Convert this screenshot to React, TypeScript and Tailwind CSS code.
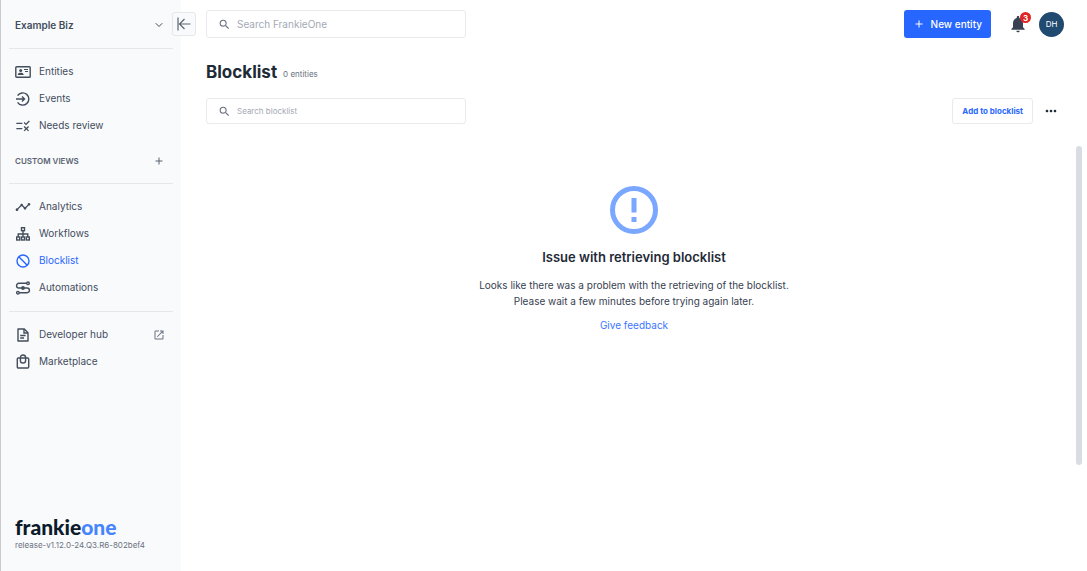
import { useState } from "react";
import type { ReactNode } from "react";
import {
  MdAdd,
  MdMoreHoriz,
  MdNotifications,
  MdOpenInNew,
  MdRule,
  MdSearch,
  MdTimeline,
} from "react-icons/md";
import { FiChevronDown } from "react-icons/fi";

type IconProps = { className?: string };

function EntitiesIcon({ className }: IconProps) {
  return (
    <svg viewBox="0 0 16 16" className={className} fill="none">
      <rect x="0.8" y="2.8" width="14.4" height="10.4" rx="0.8" stroke="currentColor" strokeWidth="1.4" />
      <circle cx="5.7" cy="6.5" r="1.5" fill="currentColor" />
      <path d="M2.7 10.9c0-1.5 1.4-2.1 3-2.1s3 .6 3 2.1z" fill="currentColor" />
      <path d="M9 5.5h4M10 7.5h3" stroke="currentColor" strokeWidth="1" />
    </svg>
  );
}

function EventsIcon({ className }: IconProps) {
  return (
    <svg viewBox="0 0 16 16" className={className} fill="none" stroke="currentColor" strokeWidth="1.4">
      <path d="M2.6 4.7A6.1 6.1 0 1 1 2.6 11.3" />
      <path d="M1 8h8.5M7 5.5 9.5 8 7 10.5" />
    </svg>
  );
}

function WorkflowsIcon({ className }: IconProps) {
  return (
    <svg viewBox="0 0 16 16" className={className} fill="none" stroke="currentColor" strokeWidth="1.4">
      <rect x="6.5" y="1.7" width="3" height="3" />
      <rect x="1.7" y="11" width="3" height="3" />
      <rect x="6.5" y="11" width="3" height="3" />
      <rect x="11.3" y="11" width="3" height="3" />
      <path d="M8 4.7V11M3.2 11V8h9.6v3" />
    </svg>
  );
}

function BlockIcon({ className }: IconProps) {
  return (
    <svg viewBox="0 0 16 16" className={className} fill="none" stroke="currentColor" strokeWidth="1.4">
      <circle cx="8" cy="8" r="6" />
      <path d="M3.8 3.8l8.4 8.4" />
    </svg>
  );
}

function AutomationsIcon({ className }: IconProps) {
  return (
    <svg viewBox="0 0 16 16" className={className} fill="none" stroke="currentColor" strokeWidth="1.4">
      <circle cx="13" cy="3.3" r="1.3" />
      <circle cx="2.9" cy="12.7" r="1.3" />
      <path d="M11.7 3.3H3.9a2.35 2.35 0 0 0 0 4.7h8.2a2.35 2.35 0 0 1 0 4.7H4.2" />
      <circle cx="8" cy="8" r="1.9" fill="currentColor" stroke="none" />
    </svg>
  );
}

function DocIcon({ className }: IconProps) {
  return (
    <svg viewBox="0 0 16 16" className={className} fill="none" stroke="currentColor" strokeWidth="1.4">
      <path d="M3 2h6.3L13 5.7V14H3z" strokeLinejoin="round" />
      <path d="M9 2v4h4M5.2 8.5h5.4M5.2 11h3.8" />
    </svg>
  );
}

function BagIcon({ className }: IconProps) {
  return (
    <svg viewBox="0 0 16 16" className={className} fill="none" stroke="currentColor" strokeWidth="1.4">
      <rect x="2.3" y="4" width="11.4" height="10" rx="1" />
      <path d="M5.4 6.4V3.6a2.6 2.6 0 0 1 5.2 0v2.8a2.6 2.6 0 0 1-5.2 0z" />
    </svg>
  );
}

function CollapseIcon({ className }: IconProps) {
  return (
    <svg viewBox="0 0 14 14" className={className} fill="none" stroke="currentColor" strokeWidth="1.2">
      <path d="M1 .5v13M13.5 7H2.5M7.5 2 2.5 7l5 5" />
    </svg>
  );
}

function ErrorIcon({ className }: IconProps) {
  return (
    <svg viewBox="0 0 48 48" className={className} fill="none">
      <circle cx="24" cy="24" r="21.5" stroke="currentColor" strokeWidth="5" />
      <path d="M21.5 12h5v14.5h-5zM21.5 31h5v5h-5z" fill="currentColor" />
    </svg>
  );
}

type NavItemProps = {
  icon: ReactNode;
  label: string;
  active?: boolean;
  external?: boolean;
};

function NavItem({ icon, label, active, external }: NavItemProps) {
  return (
    <li>
      <a
        href="#"
        className={`flex h-[27px] items-center gap-2 px-1.5 text-[10px] ${
          active ? "text-[#2766ff]" : "text-[#434d5c]"
        }`}
      >
        {icon}
        <span className="flex-1">{label}</span>
        {external && <MdOpenInNew className="mr-0.5 size-3 text-[#6b7280]" />}
      </a>
    </li>
  );
}

function SearchBox({ id, placeholder, className }: { id: string; placeholder: string; className: string }) {
  return (
    <label
      htmlFor={id}
      className={`flex w-[260px] items-center gap-1.5 rounded-[3px] border border-[#e8eaed] bg-white px-[11px] ${className}`}
    >
      <MdSearch className="size-[13px] shrink-0 text-[#6b7280]" />
      <input
        id={id}
        type="text"
        placeholder={placeholder}
        aria-label={placeholder}
        className="w-full bg-transparent outline-none placeholder:text-[#a3a9b5]"
      />
    </label>
  );
}

function Sidebar({ onCollapse }: { onCollapse: () => void }) {
  return (
    <aside className="relative flex w-[181px] shrink-0 flex-col border-l border-[#c9cbce] bg-[#f9fafc] px-2">
      <button
        type="button"
        className="flex h-12 items-center justify-between px-1.5 pt-0.5 text-[10px] font-semibold text-[#434d5c]"
      >
        Example Biz
        <FiChevronDown className="mr-0.5 size-3" />
      </button>
      <button
        type="button"
        onClick={onCollapse}
        aria-label="Collapse menu"
        className="absolute top-3 left-[171px] flex size-6 items-center justify-center rounded-[3px] border border-[#e5e7eb] bg-[#f9fafc] text-[#5b6472]"
      >
        <CollapseIcon className="size-3.5" />
      </button>

      <nav>
        <ul className="border-t border-[#e5e7eb] pt-[9px]">
          <NavItem icon={<EntitiesIcon className="size-4" />} label="Entities" />
          <NavItem icon={<EventsIcon className="size-4" />} label="Events" />
          <NavItem icon={<MdRule className="size-4" />} label="Needs review" />
        </ul>
        <div className="flex h-11 items-center justify-between px-1.5 text-[8px] font-semibold text-[#5b6472]">
          CUSTOM VIEWS
          <button type="button" aria-label="Add custom view">
            <MdAdd className="mr-0.5 size-3" />
          </button>
        </div>
        <ul className="border-t border-[#e5e7eb] pt-[9px] pb-2.5">
          <NavItem icon={<MdTimeline className="size-4" />} label="Analytics" />
          <NavItem icon={<WorkflowsIcon className="size-4" />} label="Workflows" />
          <NavItem icon={<BlockIcon className="size-4" />} label="Blocklist" active />
          <NavItem icon={<AutomationsIcon className="size-4" />} label="Automations" />
        </ul>
        <ul className="border-t border-[#e5e7eb] pt-[9px]">
          <NavItem icon={<DocIcon className="size-4" />} label="Developer hub" external />
          <NavItem icon={<BagIcon className="size-4" />} label="Marketplace" />
        </ul>
      </nav>

      <div className="mt-auto px-1.5 pb-5">
        <div className="font-['Lato',sans-serif] text-[21px] leading-6 font-black text-[#0b1b2b]">
          frankie<span className="text-[#4785ff]">one</span>
        </div>
        <div className="text-[8px] leading-3 text-[#6b7280]">release-v1.12.0-24.Q3.R6-802bef4</div>
      </div>
    </aside>
  );
}

export default function App() {
  const [collapsed, setCollapsed] = useState(false);

  return (
    <div className="flex min-h-screen bg-white font-['Inter','Liberation_Sans',sans-serif] text-[#1f2a37]">
      {!collapsed && <Sidebar onCollapse={() => setCollapsed(true)} />}

      <main className="flex min-w-0 flex-1 flex-col">
        {/* top bar */}
        <header className="flex items-center justify-between pt-2.5 pr-[23px] pl-[25px]">
          <SearchBox id="search-all" placeholder="Search FrankieOne" className="h-7 text-[10px]" />
          <div className="flex items-center">
            <button
              type="button"
              className="flex h-7 items-center gap-1.5 rounded-[3px] bg-[#2766ff] px-[9px] text-[10px] font-medium text-white"
            >
              <MdAdd className="size-3" />
              New entity
            </button>
            <button type="button" aria-label="Notifications" className="relative ml-[17px]">
              <MdNotifications className="size-5 text-[#374151]" />
              <span className="absolute -top-0.5 left-3 flex size-[11px] items-center justify-center rounded-full bg-[#e02424] text-[8px] font-bold text-white">
                3
              </span>
            </button>
            <button
              type="button"
              className="ml-[11px] flex size-[25px] items-center justify-center rounded-full bg-[#214a70] text-[8px] text-white"
            >
              DH
            </button>
          </div>
        </header>

        <div className="flex h-[60px] items-center gap-1.5 pt-2 pl-[25px]">
          <h1 className="text-[17px] leading-6 font-bold">Blocklist</h1>
          <span className="pt-1 text-[8px] text-[#6b7280]">0 entities</span>
        </div>

        <div className="flex items-center justify-between pr-7 pl-[25px]">
          <SearchBox id="search-blocklist" placeholder="Search blocklist" className="h-[26px] text-[8px]" />
          <div className="flex items-center gap-2.5">
            <button
              type="button"
              className="h-[26px] rounded-[3px] border border-[#e8eaed] px-[9px] text-[8px] font-bold text-[#2766ff]"
            >
              Add to blocklist
            </button>
            <button type="button" aria-label="More actions">
              <MdMoreHoriz className="size-4" />
            </button>
          </div>
        </div>

        {/* error state */}
        <section className="relative mt-[22px] flex flex-1 flex-col items-center pt-10 text-center">
          <ErrorIcon className="size-12 text-[#7aa7ff]" />
          <h2 className="mt-[13px] text-[13px] leading-5 font-semibold">Issue with retrieving blocklist</h2>
          <p className="mt-2.5 text-[10px] leading-4 text-[#374151]">
            Looks like there was a problem with the retrieving of the blocklist.
            <br />
            Please wait a few minutes before trying again later.
          </p>
          <a href="#" className="mt-2 text-[10px] leading-4 text-[#3b76ff]">
            Give feedback
          </a>
          <div className="absolute inset-y-0 right-[5px] w-1.5">
            <div className="h-3/4 rounded-full bg-[#d9dce2]" />
          </div>
        </section>
      </main>
    </div>
  );
}
